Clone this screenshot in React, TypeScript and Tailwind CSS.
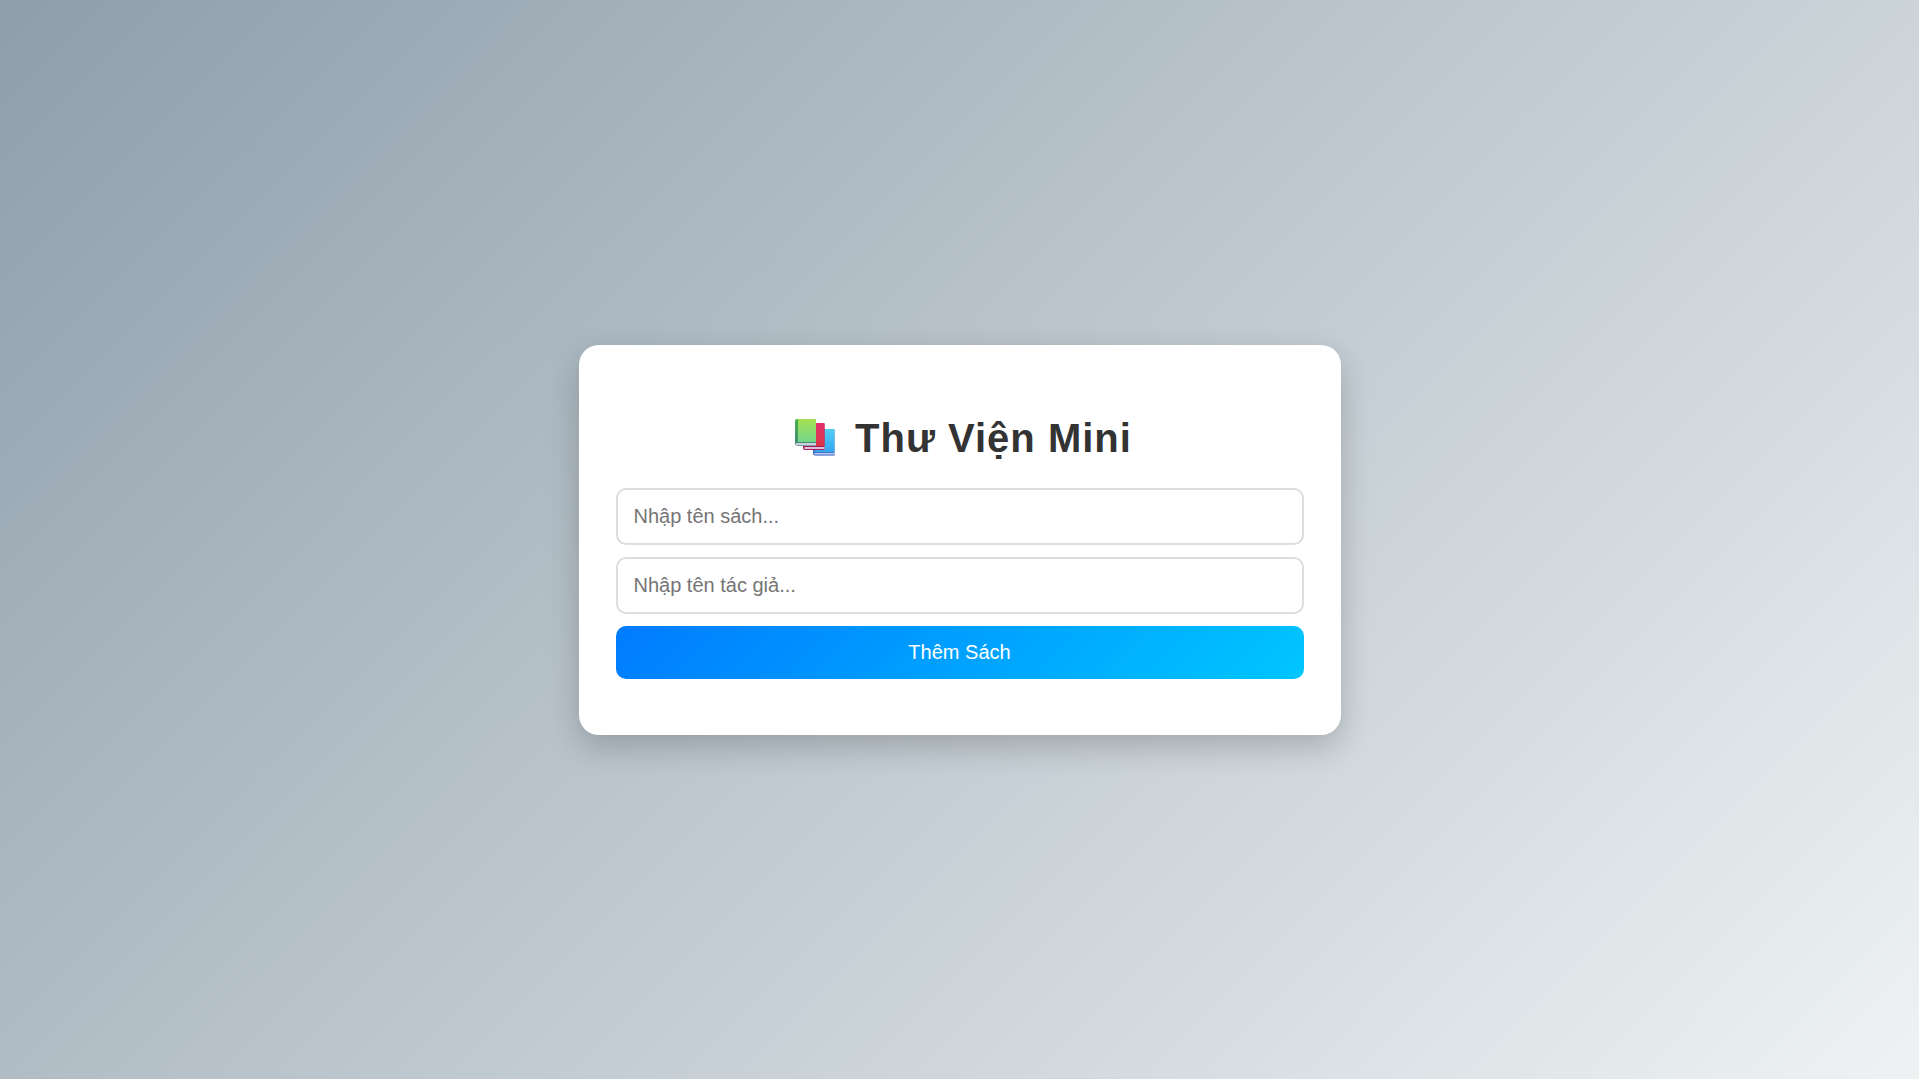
import { useState } from "react";
import type { FormEvent } from "react";

function BooksIcon() {
  return (
    <svg viewBox="0 0 40 37" className="h-[37px] w-10 shrink-0" role="img" aria-label="Sách">
      <defs>
        <linearGradient id="green" x1="0" y1="0" x2="0" y2="1">
          <stop offset="0" stopColor="#a6e04f" />
          <stop offset="1" stopColor="#73d68c" />
        </linearGradient>
        <linearGradient id="spine" x1="0" y1="0" x2="0" y2="1">
          <stop offset="0" stopColor="#4cad50" />
          <stop offset="1" stopColor="#3f8a76" />
        </linearGradient>
        <linearGradient id="red" x1="0" y1="0" x2="0" y2="1">
          <stop offset="0" stopColor="#e2306f" />
          <stop offset="1" stopColor="#dc3545" />
        </linearGradient>
        <linearGradient id="blue" x1="0" y1="0" x2="0" y2="1">
          <stop offset="0" stopColor="#54cdf3" />
          <stop offset="1" stopColor="#36a5ee" />
        </linearGradient>
      </defs>
      <path d="M20 10h18.500q1 0 1 1v25.500H20q-2 0-2-2V12q0-2 2-2z" fill="#3d78cf" />
      <path d="M20 10h18.500q1 0 1 1v22H20z" fill="url(#blue)" />
      <path d="M19.500 34h20v1.500h-20z" fill="#c3c6ee" />
      <path d="M19 35.500h20.500v1H20z" fill="#7d91dc" />
      <path d="M10 4h18.500q1 0 1 1v26H10q-2 0-2-2V6q0-2 2-2z" fill="#a81d55" />
      <path d="M11 4h17.500q1 0 1 1v22H11z" fill="url(#red)" />
      <path d="M9.500 28h20v2h-20z" fill="#e0c0e0" />
      <path d="M8 22h13v5H8z" fill="#a02f52" />
      <path d="M2 0h18q1 0 1 1v25.500H2q-2 0-2-2V2q0-2 2-2z" fill="url(#spine)" />
      <path d="M3 0h17q1 0 1 1v22H3z" fill="url(#green)" />
      <path d="M1 24h20v2H1z" fill="#d0cfe2" />
      <path d="M1 26h20v1H2z" fill="#78a3a2" />
    </svg>
  );
}

const fieldClass =
  "w-full rounded-[10px] border-2 border-[#dddddd] bg-white px-4 py-[15px] text-[20px] leading-[23px] text-[#333333] outline-none placeholder:text-[#757575] focus:border-[#007bff]";

export default function App() {
  const [title, setTitle] = useState("");
  const [author, setAuthor] = useState("");

  const submit = (event: FormEvent) => {
    event.preventDefault();
    setTitle("");
    setAuthor("");
  };

  return (
    <main className="flex min-h-screen items-center justify-center bg-[linear-gradient(135deg,#8e9eab,#eef2f3)] font-['Liberation_Sans',Arial,sans-serif]">
      <section className="w-full max-w-[762px] rounded-[20px] bg-white px-[37px] pt-[70px] pb-14 shadow-[0_12px_32px_rgba(0,0,0,0.2)]">
        <h1 className="mb-[27px] flex items-center justify-center gap-5 pl-2 text-[40px] leading-[46px] font-bold tracking-[1px] text-[#333333]">
          <BooksIcon />
          Thư Viện Mini
        </h1>
        <form onSubmit={submit} className="flex flex-col gap-3">
          <input
            aria-label="Tên sách"
            className={fieldClass}
            placeholder="Nhập tên sách..."
            value={title}
            onChange={(e) => setTitle(e.target.value)}
          />
          <input
            aria-label="Tên tác giả"
            className={fieldClass}
            placeholder="Nhập tên tác giả..."
            value={author}
            onChange={(e) => setAuthor(e.target.value)}
          />
          <button
            type="submit"
            className="w-full cursor-pointer rounded-[10px] bg-[linear-gradient(135deg,#007bff,#00c6ff)] py-[15px] text-[20px] leading-[23px] text-white"
          >
            Thêm Sách
          </button>
        </form>
      </section>
    </main>
  );
}
